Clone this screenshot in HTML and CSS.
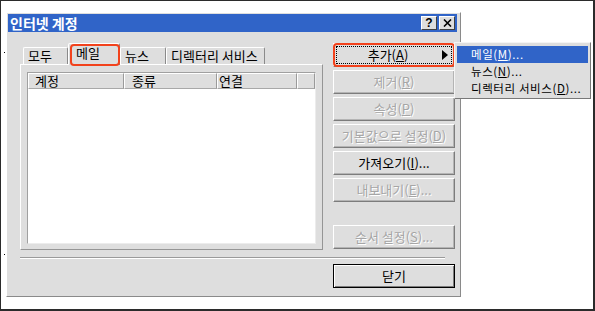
FILE: index.html
```html
<html>

<head>
    <link rel="stylesheet" href="styles.css">
</head>

<body>
    <div class="screen">
        <span class="dot dot1"></span>
        <span class="dot dot2"></span>

        <div class="dialog">
            <div class="titlebar">
                <span class="title">인터넷 계정</span>
                <div class="caption-btns">
                    <span class="cbtn">?</span>
                    <span class="cbtn">
                        <svg width="9" height="8" viewBox="0 0 9 8">
                            <path d="M1 0.5 L8 7.5 M8 0.5 L1 7.5" stroke="#000" stroke-width="1.6" />
                        </svg>
                    </span>
                </div>
            </div>

            <div class="dialog-body">
                <div class="main">
                    <div class="left">
                        <div class="tabs">
                            <div class="tab w1">모두</div>
                            <div class="tab w2 active mark">메일</div>
                            <div class="tab w3">뉴스</div>
                            <div class="tab w4">디렉터리 서비스</div>
                        </div>
                        <div class="panel">
                            <div class="listview">
                                <div class="lv-head">
                                    <div class="col c1">계정</div>
                                    <div class="col c2">종류</div>
                                    <div class="col c3">연결</div>
                                    <div class="col c4"></div>
                                </div>
                            </div>
                        </div>
                    </div>

                    <div class="side">
                        <button class="btn focus mark">
                            <span class="btn-text">추가(<u>A</u>)</span>
                            <span class="arrow"></span>
                        </button>
                        <button class="btn disabled">제거(<u>R</u>)</button>
                        <button class="btn disabled">속성(<u>P</u>)</button>
                        <button class="btn disabled">기본값으로 설정(<u>D</u>)</button>
                        <button class="btn">가져오기(<u>I</u>)...</button>
                        <button class="btn disabled">내보내기(<u>E</u>)...</button>
                        <button class="btn disabled spaced">순서 설정(<u>S</u>)...</button>
                    </div>
                </div>

                <div class="separator"></div>

                <div class="footer">
                    <button class="btn default">닫기</button>
                </div>
            </div>
        </div>

        <!-- 추가 버튼의 하위 메뉴 -->
        <div class="menu">
            <div class="menu-item hl">메일(<u>M</u>)...</div>
            <div class="menu-item">뉴스(<u>N</u>)...</div>
            <div class="menu-item">디렉터리 서비스(<u>D</u>)...</div>
        </div>
    </div>
</body>

</html>
```

FILE: styles.css
```css
:root {
    --face: #dedede;
    --shadow: #8a8a8a;
    --blue: #3064c8;
    --mark: #f2421c;
}

* {
    margin: 0;
    padding: 0;
}

body {
    font-family: "Noto Sans CJK KR", "Liberation Sans", sans-serif;
    font-size: 13px;
    color: #000;
    background: #fff;
}

.screen {
    position: relative;
    width: 595px;
    height: 311px;
    box-sizing: border-box;
    border-style: solid;
    border-color: #2b2b2b;
    border-width: 1px 2px 2px 1px;
    background: #fff;
    overflow: hidden;
}

.dot {
    position: absolute;
    left: 3px;
    width: 1px;
    height: 1px;
    background: #000;
}

.dot1 {
    top: 51px;
}

.dot2 {
    top: 253px;
}

/* ダイアログ本体 */
.dialog {
    margin: 11px 0 0 5px;
    width: 455px;
    height: 285px;
    box-sizing: border-box;
    border: 1px solid;
    border-color: #fff var(--shadow) var(--shadow) #fff;
    padding: 1px 3px 3px 1px;
    background: var(--face);
}

.titlebar {
    display: flex;
    align-items: center;
    justify-content: space-between;
    height: 18px;
    padding: 0 2px 0 2px;
    background: var(--blue);
}

.title {
    color: #fff;
    font-weight: bold;
    font-size: 14px;
    line-height: 18px;
}

.caption-btns {
    display: flex;
    gap: 2px;
}

.cbtn {
    display: flex;
    align-items: center;
    justify-content: center;
    width: 16px;
    height: 14px;
    box-sizing: border-box;
    border: 1px solid;
    border-color: #fff #404040 #404040 #fff;
    background: var(--face);
    font-family: "Liberation Sans", sans-serif;
    font-weight: bold;
    font-size: 12px;
    line-height: 12px;
}

.dialog-body {
    padding: 11px 2px 0 12px;
}

.main {
    display: flex;
    gap: 10px;
}

.left {
    width: 303px;
}

/* タブ */
.tabs {
    display: flex;
    align-items: flex-end;
    height: 21px;
    padding-left: 3px;
}

.tab {
    height: 17px;
    box-sizing: border-box;
    border: 1px solid;
    border-bottom: none;
    border-color: #fff var(--shadow) transparent #fff;
    border-radius: 2px 2px 0 0;
    padding-left: 4px;
    line-height: 15px;
    white-space: nowrap;
}

.tab.active {
    position: relative;
    z-index: 1;
    height: 22px;
    margin-bottom: -1px;
    padding-left: 7px;
    line-height: 18px;
    background: var(--face);
}

.w1 {
    width: 45px;
}

.w2 {
    width: 52px;
}

.w3 {
    width: 46px;
}

.w4 {
    width: 99px;
}

/* 注釈の赤枠 */
.mark {
    position: relative;
}

.mark::after {
    content: "";
    position: absolute;
    border: 2px solid var(--mark);
    border-radius: 4px;
    pointer-events: none;
}

.tab.mark::after {
    top: 0;
    left: 1px;
    right: -1px;
    bottom: -1px;
}

.btn.mark::after {
    top: -1px;
    left: -1px;
    right: -1px;
    bottom: -1px;
}

.panel {
    height: 186px;
    box-sizing: border-box;
    border: 1px solid;
    border-color: #fff #959595 #959595 #fff;
    padding: 7px 6px 5px 6px;
}

.listview {
    height: 100%;
    box-sizing: border-box;
    border: 1px solid;
    border-color: #a0a0a0 #ececec #ececec #a0a0a0;
    background: #fff;
}

.lv-head {
    display: flex;
    height: 16px;
    background: var(--face);
}

.col {
    box-sizing: border-box;
    border-style: solid;
    border-width: 1px 1px 1px 1px;
    border-color: #fff #9a9a9a #a8a8a8 #fff;
    padding-left: 6px;
    line-height: 13px;
}

.c1 {
    width: 96px;
}

.c2 {
    width: 93px;
    padding-left: 7px;
}

.c3 {
    width: 80px;
    padding-left: 1px;
}

.c4 {
    flex: 1;
}

/* 右側のボタン */
.side {
    display: flex;
    flex-direction: column;
    gap: 3px;
    width: 122px;
}

.btn {
    display: block;
    width: 122px;
    height: 24px;
    box-sizing: border-box;
    border: 1px solid;
    border-color: #fff #7c7c7c #7c7c7c #fff;
    box-shadow: inset -1px -1px 0 #b4b4b4;
    background: var(--face);
    font: inherit;
    color: #000;
    text-align: center;
    line-height: 20px;
    white-space: nowrap;
}

.btn.disabled {
    color: #a6a6a6;
    text-shadow: 1px 1px 0 #fff;
}

.btn.focus {
    display: flex;
    align-items: center;
    outline: 1px dotted #000;
    outline-offset: -4px;
}

.btn-text {
    flex: 1;
    text-align: center;
}

.arrow {
    width: 0;
    height: 0;
    margin-right: 6px;
    border-left: 6px solid #000;
    border-top: 5px solid transparent;
    border-bottom: 5px solid transparent;
}

.btn.spaced {
    margin-top: 20px;
}

.btn.default {
    border: 1px solid #000;
    box-shadow: inset 1px 1px 0 #fff, inset -1px -1px 0 #7c7c7c;
}

.separator {
    width: 425px;
    height: 0;
    margin-top: 7px;
    border-top: 1px solid #9a9a9a;
    border-bottom: 1px solid #fff;
}

.footer {
    display: flex;
    justify-content: flex-end;
    margin-top: 5px;
}

/* サブメニュー */
.menu {
    position: absolute;
    left: 453px;
    top: 41px;
    width: 137px;
    box-sizing: border-box;
    border: 1px solid;
    border-color: #f4f4f4 #787878 #787878 #f4f4f4;
    padding: 3px 2px 1px 2px;
    background: var(--face);
}

.menu-item {
    height: 17px;
    line-height: 17px;
    padding-left: 14px;
    font-size: 11.5px;
    letter-spacing: 0.6px;
    white-space: nowrap;
}

.menu-item.hl {
    background: var(--blue);
    color: #fff;
}
```
